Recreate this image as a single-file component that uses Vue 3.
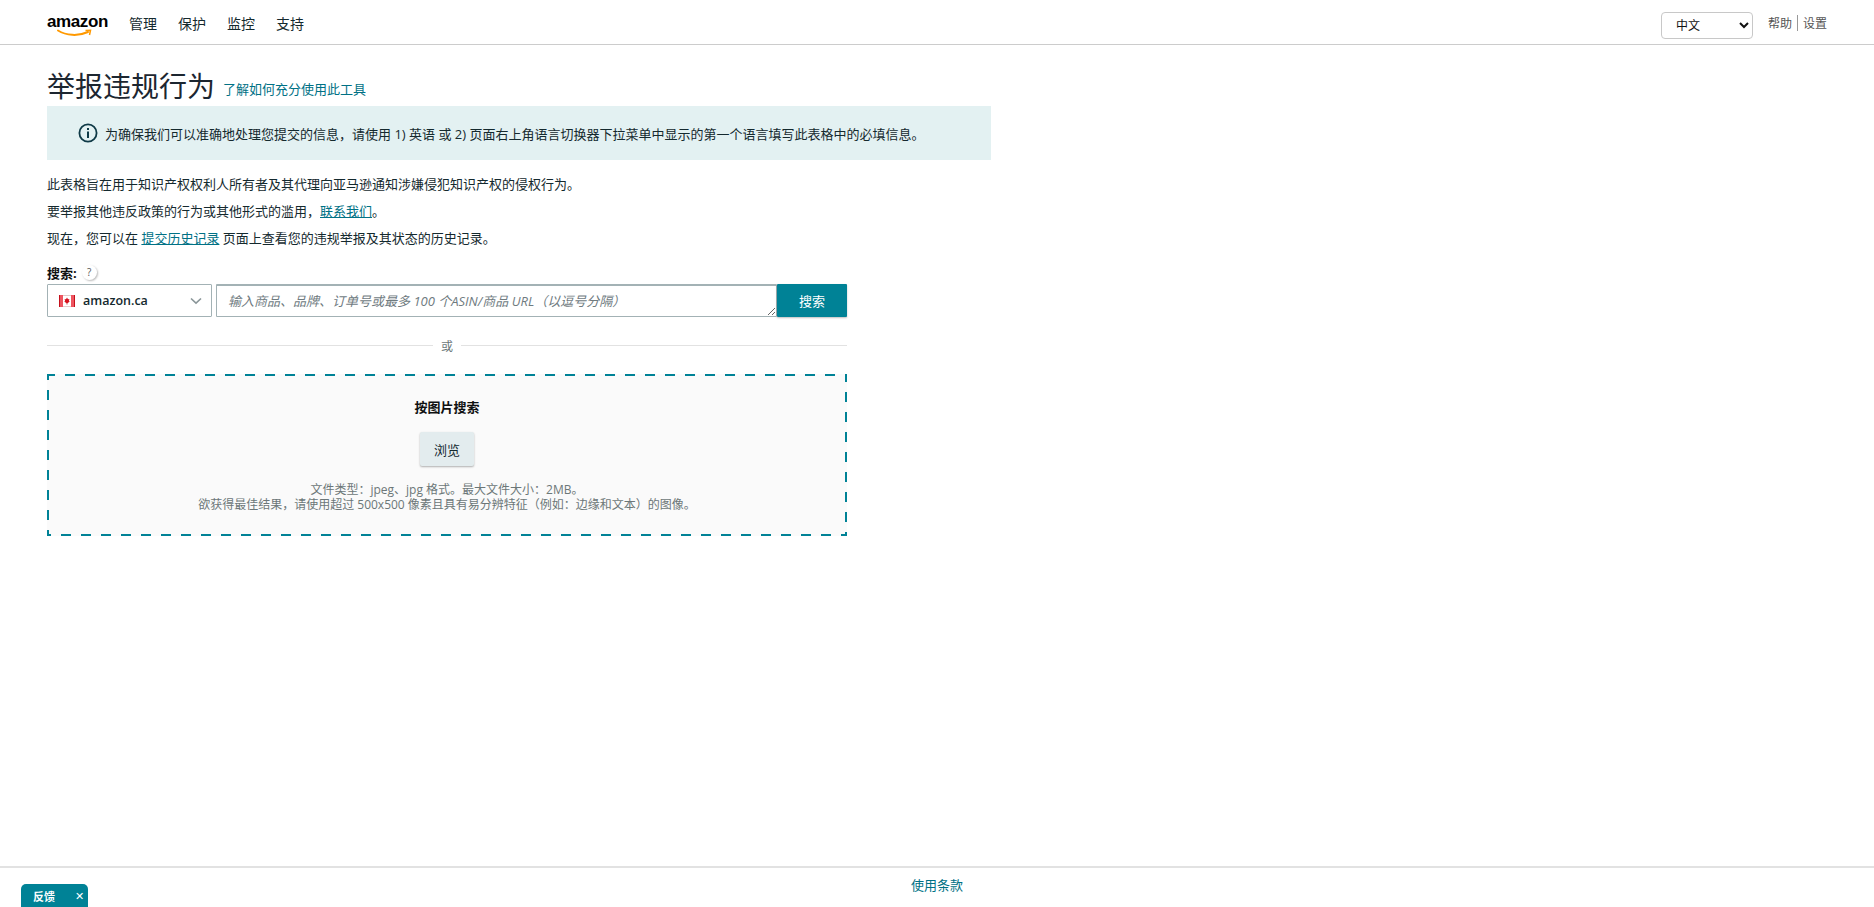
<script setup>
const navItems = ['管理', '保护', '监控', '支持']
</script>

<template>
  <div class="page">
    <header class="top">
      <div class="brand">
        <span class="wordmark">amazon</span>
        <svg class="smile" width="38" height="9" viewBox="0 0 38 9">
          <path d="M2 1.5C10 6.5 22 7.5 32 3" fill="none" stroke="#f90" stroke-width="2" stroke-linecap="round" />
          <path d="M29.5 1.5L34.5 1.2L33.5 6" fill="none" stroke="#f90" stroke-width="1.5" />
        </svg>
      </div>
      <nav class="nav">
        <span v-for="item in navItems" :key="item">{{ item }}</span>
      </nav>
      <div class="right">
        <select class="lang"><option>中文</option></select>
        <span class="util">帮助</span>
        <span class="sep"></span>
        <span class="util">设置</span>
      </div>
    </header>

    <main class="main">
      <div class="heading">
        <h1>举报违规行为</h1>
        <a class="link">了解如何充分使用此工具</a>
      </div>
      <div class="banner">
        <svg width="20" height="20" viewBox="0 0 20 20">
          <circle cx="10" cy="10" r="8.6" fill="none" stroke="#0f3a47" stroke-width="1.8" />
          <rect x="9" y="8.5" width="2" height="6.5" fill="#0f3a47" />
          <rect x="9" y="5" width="2" height="2" fill="#0f3a47" />
        </svg>
        <span>为确保我们可以准确地处理您提交的信息，请使用 1) 英语 或 2) 页面右上角语言切换器下拉菜单中显示的第一个语言填写此表格中的必填信息。</span>
      </div>
      <p class="line">此表格旨在用于知识产权权利人所有者及其代理向亚马逊通知涉嫌侵犯知识产权的侵权行为。</p>
      <p class="line">要举报其他违反政策的行为或其他形式的滥用，<a class="link under">联系我们</a>。</p>
      <p class="line">现在，您可以在 <a class="link under">提交历史记录</a> 页面上查看您的违规举报及其状态的历史记录。</p>

      <div class="form">
        <div class="label">
          <b>搜索:</b>
          <span class="help">?</span>
        </div>
        <div class="search">
          <div class="market">
            <svg class="flag" width="16" height="12" viewBox="0 0 16 12">
              <rect width="16" height="12" fill="#f3f0f0" />
              <rect y="0.5" width="16" height="11" fill="#fff" stroke="#e4c9c9" stroke-width="1" />
              <rect width="1" height="12" fill="#c4101c" />
              <rect x="1" width="3" height="12" fill="#ee5560" />
              <rect x="12" width="3" height="12" fill="#ee5560" />
              <rect x="15" width="1" height="12" fill="#c4101c" />
              <path d="M8 2.5L9 4.3L10.4 3.9L9.9 6L10.8 6.5L8.4 8.3V9.6H7.6V8.3L5.2 6.5L6.1 6L5.6 3.9L7 4.3Z" fill="#d5121e" />
            </svg>
            <span class="market-name">amazon.ca</span>
            <svg class="chev" width="12" height="8" viewBox="0 0 12 8">
              <path d="M1 1.5L6 6.2L11 1.5" fill="none" stroke="#8a9699" stroke-width="1.6" />
            </svg>
          </div>
          <textarea class="query" placeholder="输入商品、品牌、订单号或最多 100 个ASIN/商品 URL（以逗号分隔）"></textarea>
          <button class="primary">搜索</button>
        </div>
        <div class="or"><span>或</span></div>
        <div class="drop">
          <b class="drop-title">按图片搜索</b>
          <button class="browse">浏览</button>
          <div class="hint">
            <div>文件类型：jpeg、jpg 格式。最大文件大小：2MB。</div>
            <div>欲获得最佳结果，请使用超过 500x500 像素且具有易分辨特征（例如：边缘和文本）的图像。</div>
          </div>
        </div>
      </div>
    </main>

    <footer class="foot">
      <a class="link">使用条款</a>
    </footer>
    <div class="feedback">
      <span>反馈</span>
      <span class="close">✕</span>
    </div>
  </div>
</template>

<style>
html, body { margin: 0; padding: 0; background: #fff; overflow: hidden; }
</style>

<style scoped>
.page {
  position: relative;
  height: 907px;
  display: flex;
  flex-direction: column;
  font-family: "Open Sans", "Noto Sans CJK SC", sans-serif;
  font-size: 13px;
  color: #0f1111;
}
.top {
  height: 44px;
  flex: none;
  border-bottom: 1px solid #ccc;
  display: flex;
  align-items: center;
  padding: 0 47px 0 47px;
}
.brand { position: relative; width: 61px; height: 30px; }
.wordmark {
  display: block;
  font-family: "Liberation Sans", sans-serif;
  font-weight: 700;
  font-size: 17px;
  line-height: 18px;
  letter-spacing: -0.4px;
  color: #000;
  margin-top: 6px;
}
.smile { position: absolute; left: 9px; top: 22px; }
.nav { display: flex; gap: 21px; margin-left: 21px; font-size: 14px; color: #14292e; margin-top: 2px; }
.right { margin-left: auto; display: flex; align-items: center; color: #555; font-size: 12px; }
.util { margin-top: 1px; }
.lang {
  width: 92px;
  height: 27px;
  margin: 7px 15px 0 0;
  padding-left: 10px;
  border: 1px solid #c8c8c8;
  border-radius: 4px;
  background: #fff;
  font-family: inherit;
  font-size: 12px;
  color: #111;
}
.sep { width: 1px; height: 16px; background: #999; margin: 1px 5px 0 5px; }
.main { flex: 1; padding: 24px 0 0 47px; }
.heading { display: flex; align-items: flex-start; height: 37px; }
h1 { margin: -1px 0 1px; font-size: 28px; font-weight: 400; line-height: 37px; color: #1c2630; }
.link { color: #007185; }
.heading .link { margin: 11px 0 0 8px; font-size: 13px; line-height: 18px; }
.under { text-decoration: underline; }
.banner {
  width: 944px;
  height: 54px;
  box-sizing: border-box;
  background: #e3f1f2;
  display: flex;
  align-items: center;
  gap: 7px;
  padding-left: 31px;
  color: #14292e;
}
.line { margin: 0; line-height: 27px; color: #14292e; }
.banner + .line { margin-top: 11px; }
.form { width: 800px; margin-top: 11px; }
.label { display: flex; align-items: center; gap: 5px; height: 19px; font-size: 13px; }
.help {
  width: 15px;
  height: 15px;
  border-radius: 50%;
  box-shadow: 1px 1px 2px #bbb;
  color: #555;
  font-size: 10px;
  text-align: center;
  line-height: 15px;
}
.search { display: flex; height: 33px; margin-top: 2px; }
.market {
  width: 165px;
  box-sizing: border-box;
  border: 1px solid #a3b2b5;
  border-radius: 1px;
  display: flex;
  align-items: center;
  padding: 0 9px 0 11px;
  background: #fff;
}
.flag { flex: none; }
.market-name { margin-left: 8px; font-weight: 600; font-size: 12.5px; color: #14292e; }
.chev { margin-left: auto; }
.query {
  flex: 1;
  margin: 0 0 0 4px;
  box-sizing: border-box;
  border: 1px solid #a3b2b5;
  border-top-width: 2px;
  padding: 5px 10px 5px 11px;
  font-family: inherit;
  font-size: 13px;
  outline: none;
  border-radius: 1px;
}
.query::placeholder { color: #6f7b7f; font-style: italic; }
.primary {
  width: 70px;
  border: 0;
  background: #008296;
  color: #fff;
  font-family: inherit;
  font-size: 13px;
  border-radius: 1px;
  box-shadow: 0 1px 2px rgba(0,0,0,.25);
}
.or {
  display: flex;
  align-items: center;
  gap: 8px;
  margin-top: 20px;
  height: 17px;
  font-size: 12px;
  color: #6c7778;
}
.or::before, .or::after { content: ""; flex: 1; height: 1px; background: #e2e2e2; }
.drop {
  margin-top: 20px;
  height: 162px;
  box-sizing: border-box;
  background:
    repeating-linear-gradient(90deg, #008296 0 8px, transparent 8px 18px, #008296 18px 20px) top / 100% 2px no-repeat,
    repeating-linear-gradient(90deg, #008296 0 4px, transparent 4px 14px, #008296 14px 20px) bottom / 100% 2px no-repeat,
    repeating-linear-gradient(180deg, #008296 0 6px, transparent 6px 16px, #008296 16px 20px) left / 2px 100% no-repeat,
    repeating-linear-gradient(180deg, #008296 0 8px, transparent 8px 18px, #008296 18px 20px) right / 2px 100% no-repeat,
    #fafafa;
  display: flex;
  flex-direction: column;
  align-items: center;
  padding-top: 23px;
}
.drop-title { font-size: 13px; line-height: 20px; }
.browse {
  margin-top: 15px;
  width: 54px;
  height: 34px;
  border: 0;
  border-radius: 2px;
  background: #e3ecee;
  box-shadow: 0 1px 2px rgba(0,0,0,.3);
  font-family: inherit;
  font-size: 13px;
  color: #14292e;
}
.hint { margin-top: 16px; text-align: center; font-size: 12px; line-height: 15px; color: #6c7778; }
.foot {
  flex: none;
  height: 39px;
  border-top: 2px solid #e2e2e2;
  text-align: center;
  line-height: 34px;
}
.feedback {
  position: absolute;
  left: 21px;
  top: 884px;
  width: 67px;
  height: 23px;
  box-sizing: border-box;
  padding: 0 4px 0 12px;
  border-radius: 5px 5px 0 0;
  background: #008296;
  color: #fff;
  font-size: 11px;
  font-weight: 600;
  display: flex;
  align-items: center;
  justify-content: space-between;
}
.close { font-size: 11px; font-weight: 400; }
</style>
